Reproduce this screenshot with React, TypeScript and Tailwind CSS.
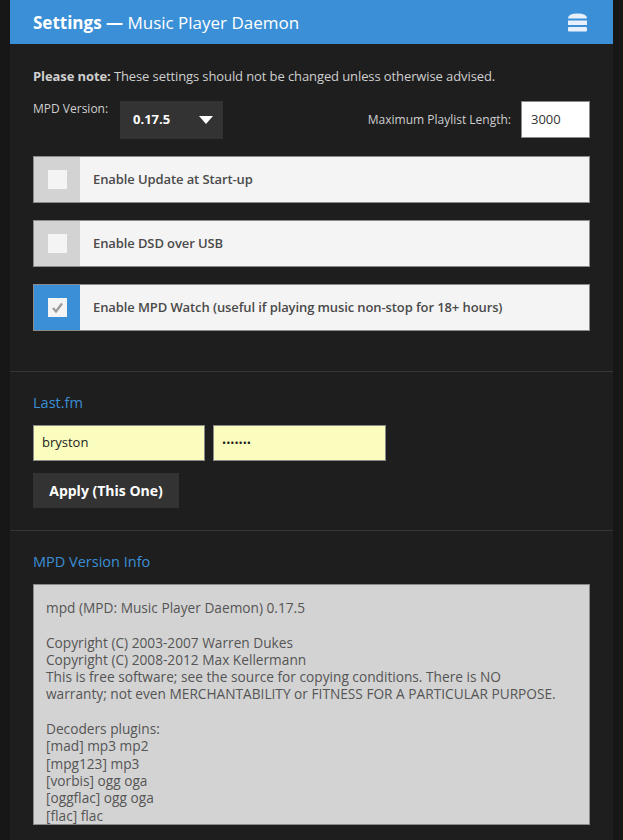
import { FC } from 'react';

const font = { fontFamily: '"Open Sans", "Liberation Sans", sans-serif' };

const CheckRow: FC<{ label: string; checked?: boolean }> = ({ label, checked }) => (
  <div className="flex h-[47px] border border-[#8a8a8a] bg-[#f4f4f4]">
    <div
      className={
        checked
          ? 'flex w-[46px] items-center justify-center bg-[#3b8fd6]'
          : 'flex w-[46px] items-center justify-center bg-[#d3d3d3]'
      }
    >
      <div className="flex h-[19px] w-[19px] items-center justify-center bg-[#f4f4f4]">
        {checked && (
          <svg width="13" height="13" viewBox="0 0 13 13">
            <polyline points="2,7 5,10.5 11,2.5" fill="none" stroke="#9a9a9a" strokeWidth="2.2" />
          </svg>
        )}
      </div>
    </div>
    <div className="flex items-center pl-[13px] text-[13px] font-semibold tracking-[-0.1px] text-[#4a4a4a]">{label}</div>
  </div>
);

const versionInfo = [
  'mpd (MPD: Music Player Daemon) 0.17.5',
  '',
  'Copyright (C) 2003-2007 Warren Dukes',
  'Copyright (C) 2008-2012 Max Kellermann',
  'This is free software; see the source for copying conditions. There is NO',
  'warranty; not even MERCHANTABILITY or FITNESS FOR A PARTICULAR PURPOSE.',
  '',
  'Decoders plugins:',
  '[mad] mp3 mp2',
  '[mpg123] mp3',
  '[vorbis] ogg oga',
  '[oggflac] ogg oga',
  '[flac] flac',
];

export default function App() {
  return (
    <div className="h-[840px] w-[623px] overflow-hidden bg-[#171717] px-[10px]" style={font}>
      <div className="h-full bg-[#1e1e1e]">
        {/* header */}
        <div className="flex h-[44px] items-center justify-between bg-[#3b8fd6] pl-[23px] pr-[26px] text-white">
          <div className="pt-[1px] text-[17px]">
            <span className="font-bold">Settings —</span> Music Player Daemon
          </div>
          <svg width="19" height="19" viewBox="0 0 19 19">
            <path d="M0 5.5 Q0 0.5 9.5 0.5 Q19 0.5 19 5.5 Z" fill="#e8f1fb" />
            <rect x="0" y="7.5" width="19" height="4.5" fill="#e8f1fb" />
            <rect x="0" y="14" width="19" height="4.5" rx="1" fill="#e8f1fb" />
          </svg>
        </div>

        {/* mpd settings */}
        <div className="px-[23px] pt-[24px] pb-[40px]">
          <p className="text-[13px] leading-[16px] tracking-[-0.1px] text-[#cfcfcf]">
            <span className="font-bold">Please note:</span> These settings should not be changed unless otherwise advised.
          </p>
          <div className="mt-[17px] flex items-start">
            <div className="w-[87px] text-[12px] leading-[16px] text-[#cfcfcf]">MPD Version:</div>
            <div className="flex h-[38px] w-[103px] items-center justify-between bg-[#333333] pl-[13px] pr-[10px]">
              <span className="text-[13px] font-bold text-white">0.17.5</span>
              <svg width="14" height="8" viewBox="0 0 14 8">
                <polygon points="0,0 14,0 7,8" fill="#ffffff" />
              </svg>
            </div>
            <div className="flex flex-1 items-center justify-end">
              <span className="text-[12px] text-[#cfcfcf]">Maximum Playlist Length:</span>
              <div className="ml-[10px] flex h-[37px] w-[69px] items-center border border-[#8a8a8a] bg-white pl-[9px] text-[13px] text-[#333]">
                3000
              </div>
            </div>
          </div>
          <div className="mt-[17px] flex flex-col gap-[17px]">
            <CheckRow label="Enable Update at Start-up" />
            <CheckRow label="Enable DSD over USB" />
            <CheckRow label="Enable MPD Watch (useful if playing music non-stop for 18+ hours)" checked />
          </div>
        </div>

        {/* last.fm */}
        <div className="border-t border-[#353535] px-[23px] pt-[21px] pb-[22px]">
          <h2 className="text-[14.5px] leading-[20px] text-[#3b8fd6]">Last.fm</h2>
          <div className="mt-[12px] flex gap-[8px]">
            <div className="flex h-[36px] w-[172px] items-center border border-[#8a8a8a] bg-[#fafdbd] pl-[8px] text-[13px] text-[#222]">
              bryston
            </div>
            <div className="flex h-[36px] w-[173px] items-center border border-[#8a8a8a] bg-[#fafdbd] pl-[8px] text-[11px] text-[#222]">
              •••••••
            </div>
          </div>
          <button className="mt-[12px] h-[35px] w-[146px] bg-[#333333] text-[14px] font-bold text-white">
            Apply (This One)
          </button>
        </div>

        {/* version info */}
        <div className="border-t border-[#353535] px-[23px] pt-[21px]">
          <h2 className="text-[14.5px] leading-[20px] text-[#3b8fd6]">MPD Version Info</h2>
          <div className="mt-[12px] h-[241px] overflow-hidden border border-[#8a8a8a] bg-[#d3d3d3] pl-[12px] pt-[14px] text-[13.7px] leading-[17.3px] text-[#555]">
            {versionInfo.map((line, i) => (
              <div key={i} className="h-[17.3px] whitespace-pre">
                {line}
              </div>
            ))}
          </div>
        </div>
      </div>
    </div>
  );
}
